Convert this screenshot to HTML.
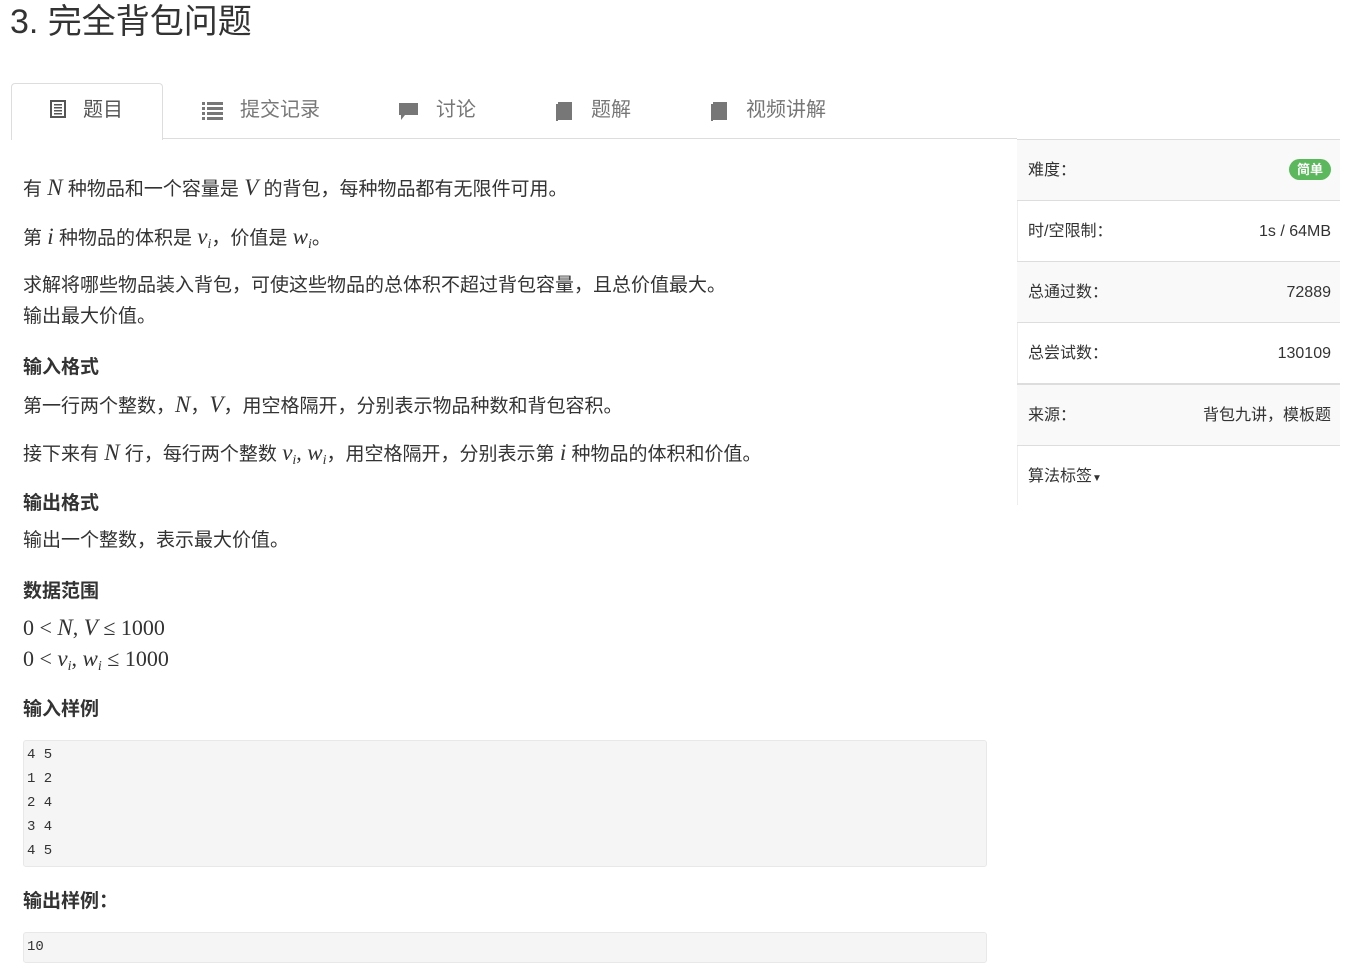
<!DOCTYPE html>
<html><head><meta charset="utf-8"><style>
body{margin:0;width:1352px;height:970px;background:#fff;font-family:"Liberation Sans","Noto Sans CJK SC",sans-serif;color:#333;position:relative;overflow:hidden}
.a{position:absolute;white-space:nowrap}
.l{position:absolute;left:23px;font-size:19px;line-height:30px;white-space:nowrap}
.b{font-weight:bold}
.m{font-family:"Liberation Serif",serif;font-style:italic;font-size:23px}
.r{font-family:"Liberation Serif",serif;font-size:22px}
sub{font-size:14px;font-family:"Liberation Serif",serif;font-style:italic;vertical-align:-4px;line-height:0}
.tab{position:absolute;top:83px;height:55px;font-size:20px;color:#777;line-height:55px}
.code{position:absolute;left:23px;width:964px;background:#f5f5f5;border:1px solid #e8e8e8;border-radius:3px;font-family:"Liberation Mono",monospace;font-size:14px;color:#333;padding-left:3px;box-sizing:border-box}
.row{position:absolute;left:1017px;width:323px;height:61px;border-top:1px solid #ddd;font-size:16px;line-height:61px;color:#333}
.row span.k{position:absolute;left:11px}
.row span.v{position:absolute;right:9px}
</style></head><body>
<div class="a" style="left:10px;top:0;font-size:34px;line-height:44px">3. 完全背包问题</div>

<div class="a" style="left:11px;top:83px;width:150px;height:56px;border:1px solid #ddd;border-bottom:none;border-radius:4px 4px 0 0;background:#fff;z-index:2"></div>
<div class="a" style="left:11px;top:138px;width:1006px;height:1px;background:#ddd"></div>
<div class="tab" style="left:48px;color:#555;z-index:3"><svg width="20" height="20" style="vertical-align:-3px;margin-right:15px"><rect x="2" y="1" width="16" height="18" fill="#555"/><rect x="4" y="3" width="12" height="14" fill="#fff"/><rect x="6" y="5" width="8" height="1.5" fill="#555"/><rect x="6" y="8" width="8" height="1.5" fill="#555"/><rect x="6" y="11" width="8" height="1.5" fill="#555"/><rect x="6" y="14" width="8" height="1.5" fill="#555"/></svg>题目</div>
<div class="tab" style="left:202px"><svg width="22" height="20" style="vertical-align:-4px;margin-right:16px"><g fill="#777"><rect x="0" y="2" width="3" height="3"/><rect x="5" y="2" width="16" height="3"/><rect x="0" y="7" width="3" height="3"/><rect x="5" y="7" width="16" height="3"/><rect x="0" y="12" width="3" height="3"/><rect x="5" y="12" width="16" height="3"/><rect x="0" y="17" width="3" height="3"/><rect x="5" y="17" width="16" height="3"/></g></svg>提交记录</div>
<div class="tab" style="left:398px"><svg width="22" height="20" style="vertical-align:-5px;margin-right:16px"><path d="M1 2h19v12H7l-4 5v-5H1z" fill="#777"/></svg>讨论</div>
<div class="tab" style="left:555px"><svg width="18" height="20" style="vertical-align:-5px;margin-right:18px"><path d="M3 1h14v18H3z" fill="#777"/><path d="M1 3h2v17H1z" fill="#777"/></svg>题解</div>
<div class="tab" style="left:710px"><svg width="18" height="20" style="vertical-align:-5px;margin-right:18px"><path d="M3 1h14v18H3z" fill="#777"/><path d="M1 3h2v17H1z" fill="#777"/></svg>视频讲解</div>

<div class="l" style="top:173px">有 <span class="m">N</span> 种物品和一个容量是 <span class="m">V</span> 的背包，每种物品都有无限件可用。</div>
<div class="l" style="top:222px">第 <span class="m">i</span> 种物品的体积是 <span class="m">v</span><sub>i</sub>，价值是 <span class="m">w</span><sub>i</sub>。</div>
<div class="l" style="top:271px">求解将哪些物品装入背包，可使这些物品的总体积不超过背包容量，且总价值最大。</div>
<div class="l" style="top:302px">输出最大价值。</div>
<div class="l b" style="top:353px">输入格式</div>
<div class="l" style="top:390px">第一行两个整数，<span class="m">N</span>，<span class="m">V</span>，用空格隔开，分别表示物品种数和背包容积。</div>
<div class="l" style="top:438px">接下来有 <span class="m">N</span> 行，每行两个整数 <span class="m">v</span><sub>i</sub><span class="r">, </span><span class="m">w</span><sub>i</sub>，用空格隔开，分别表示第 <span class="m">i</span> 种物品的体积和价值。</div>
<div class="l b" style="top:489px">输出格式</div>
<div class="l" style="top:526px">输出一个整数，表示最大价值。</div>
<div class="l b" style="top:577px">数据范围</div>
<div class="l" style="top:613px"><span class="r">0 &lt; </span><span class="m">N</span><span class="r">, </span><span class="m">V</span><span class="r"> ≤ 1000</span></div>
<div class="l" style="top:644px"><span class="r">0 &lt; </span><span class="m">v</span><sub>i</sub><span class="r">, </span><span class="m">w</span><sub>i</sub><span class="r"> ≤ 1000</span></div>
<div class="l b" style="top:695px">输入样例</div>
<div class="code" style="top:740px;height:127px;line-height:24px;padding-top:2px">4 5<br>1 2<br>2 4<br>3 4<br>4 5</div>
<div class="l b" style="top:887px">输出样例：</div>
<div class="code" style="top:932px;height:31px;line-height:29px">10</div>

<div class="a" style="left:1017px;top:139px;width:1px;height:366px;background:#eee"></div>
<div class="row" style="top:139px;background:#f9f9f9"><span class="k">难度：</span><span class="v" style="top:19px;height:21px;line-height:21px;background:#5cb85c;color:#fff;border-radius:11px;padding:0 8px;font-size:13px;font-weight:bold">简单</span></div>
<div class="row" style="top:200px"><span class="k">时/空限制：</span><span class="v">1s / 64MB</span></div>
<div class="row" style="top:261px;background:#f9f9f9"><span class="k">总通过数：</span><span class="v">72889</span></div>
<div class="row" style="top:322px"><span class="k">总尝试数：</span><span class="v">130109</span></div>
<div class="row" style="top:383px;background:#f9f9f9;border-top:2px solid #ddd;height:60px"><span class="k">来源：</span><span class="v">背包九讲，模板题</span></div>
<div class="row" style="top:445px"><span class="k">算法标签<span style="font-size:10px">▼</span></span></div>
</body></html>
